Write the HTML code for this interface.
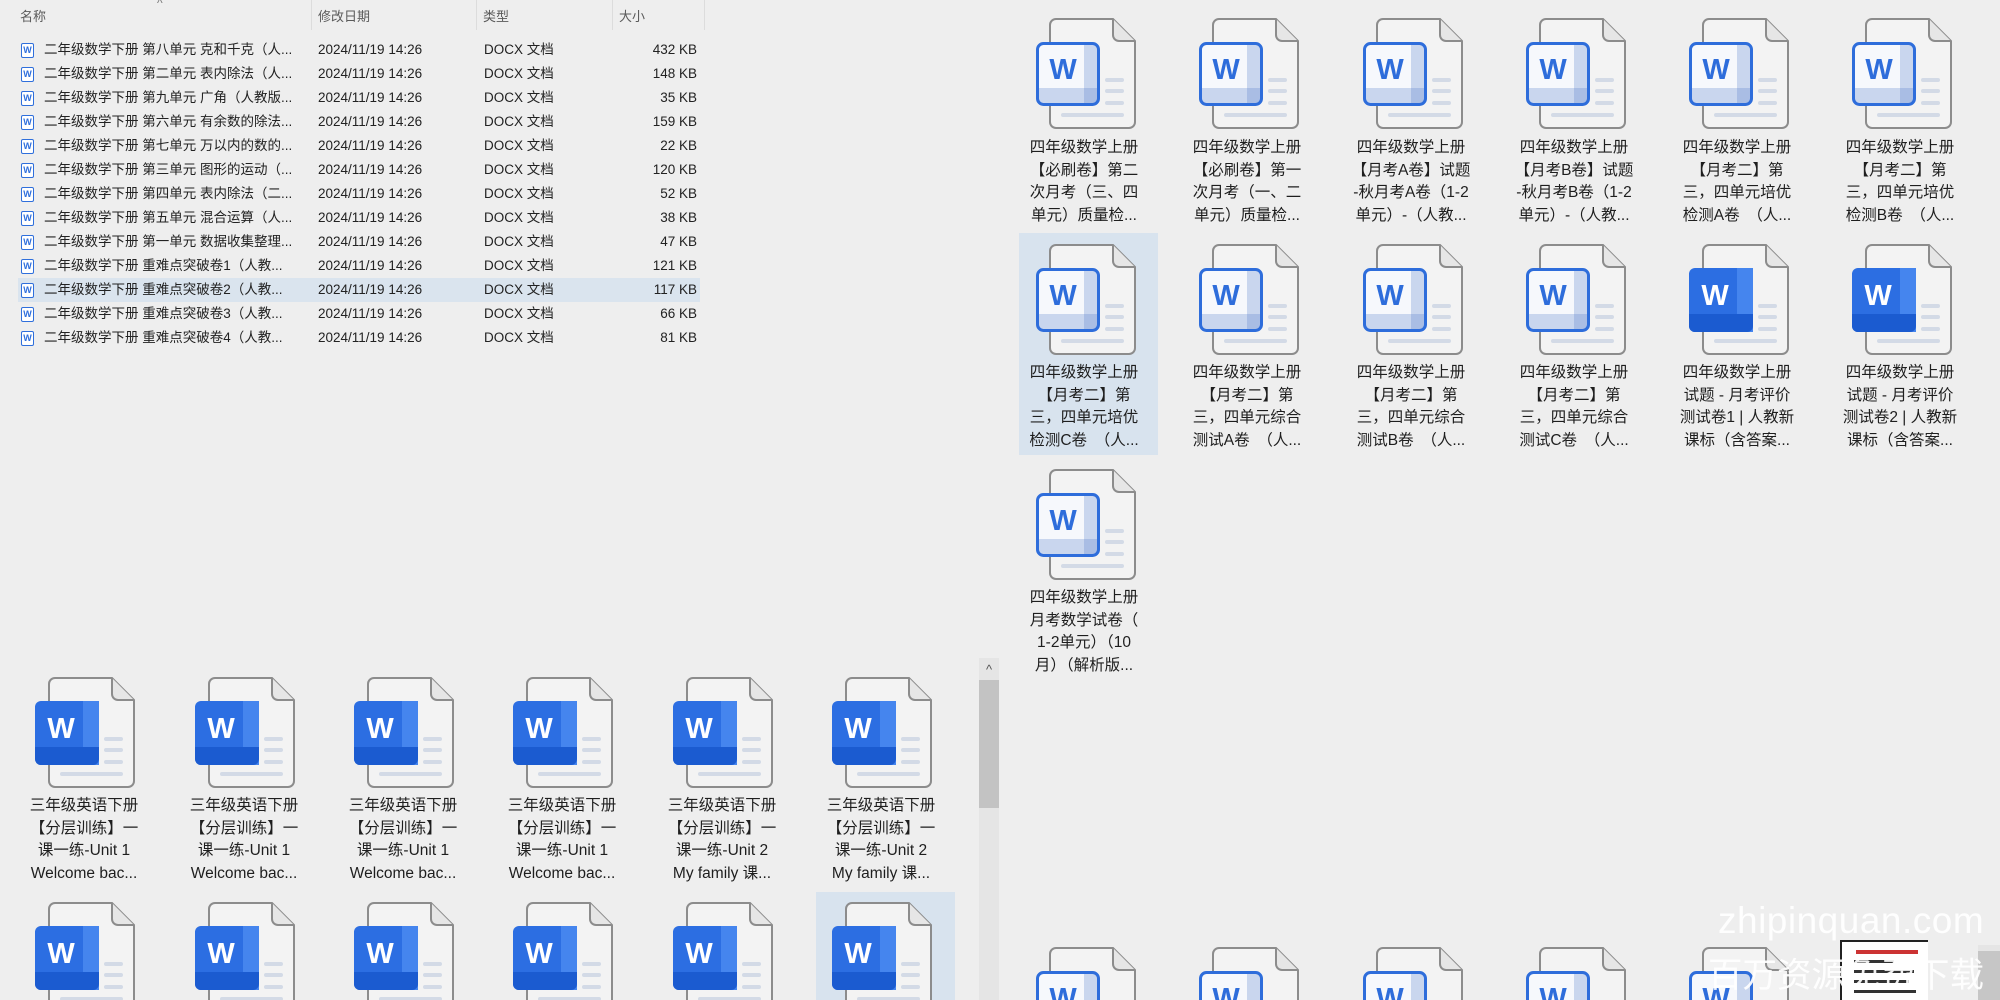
<!DOCTYPE html>
<html><head><meta charset="utf-8">
<style>
*{margin:0;padding:0;box-sizing:border-box}
html,body{width:2000px;height:1000px;overflow:hidden;background:#eeeeee;font-family:"Liberation Sans","Noto Sans CJK SC",sans-serif}
#w{position:relative;width:2000px;height:1000px;overflow:hidden;background:#eeeeee}
.a{position:absolute}
.hd{position:absolute;top:6px;font-size:13px;color:#5a5a5a}
.sep{position:absolute;top:0;width:1px;height:30px;background:#dcdcdc}
.row{position:absolute;left:18px;width:682px;height:24px;font-size:13.5px;color:#222;line-height:24px}
.row span{position:absolute;top:0;white-space:nowrap}
.ic{position:absolute;left:3px;top:5px;width:13px;height:15px;border:1.5px solid #2f6fdc;border-radius:2px;background:#fff;font:bold 9px "Liberation Sans",sans-serif;color:#2f6fdc;text-align:center;line-height:12px}
.sel{background:#dae4ee}
.lbl{position:absolute;width:140px;text-align:center;font-size:15.5px;line-height:22.5px;color:#1e1e1e;white-space:nowrap}
.icon{position:absolute;width:100px;height:112px}
</style></head><body><div id="w">
<svg width="0" height="0" style="position:absolute">
<defs>
<symbol id="pg" viewBox="0 0 100 112">
<path d="M20,1 H77 L99,23 V104 a6 6 0 0 1 -6 6 H20 a6 6 0 0 1 -6 -6 V7 a6 6 0 0 1 6 -6Z" fill="#f3f3f3" stroke="#8c8c8c" stroke-width="2"/>
<path d="M77,1 V17 a6 6 0 0 0 6 6 H99" fill="#e6e6e6" stroke="#8c8c8c" stroke-width="2"/>
<g stroke="#d3dae6" stroke-width="4" stroke-linecap="round"><line x1="71" y1="62" x2="86" y2="62"/><line x1="71" y1="73" x2="86" y2="73"/><line x1="71" y1="85" x2="86" y2="85"/><line x1="27" y1="97" x2="86" y2="97"/></g>
</symbol>
<symbol id="wl" viewBox="0 0 100 112">
<use href="#pg"/>
<rect x="1.5" y="25.5" width="61" height="61" rx="6" fill="#f6f8fc"/>
<rect x="48" y="27" width="13" height="58" fill="#c9d6ee"/>
<rect x="3" y="70" width="58" height="15" fill="#c9d6ee"/>
<rect x="48" y="70" width="13" height="15" fill="#a9bde4"/>
<rect x="1.5" y="25.5" width="61" height="61" rx="6" fill="none" stroke="#2e6ddb" stroke-width="3"/>
<text x="27" y="61" text-anchor="middle" font-family="Liberation Sans" font-weight="bold" font-size="29" fill="#2e6ddb">W</text>
</symbol>
<symbol id="ws" viewBox="0 0 100 112">
<use href="#pg"/>
<rect x="0" y="24" width="64" height="64" rx="6" fill="#2c6ee2"/>
<rect x="48" y="24" width="16" height="64" fill="#4585ee"/>
<path d="M0,70 H64 V82 a6 6 0 0 1 -6 6 H6 a6 6 0 0 1 -6 -6Z" fill="#1b5bd0"/>
<text x="26" y="61" text-anchor="middle" font-family="Liberation Sans" font-weight="bold" font-size="29" fill="#fff">W</text>
</symbol>
</defs></svg>

<div class="hd" style="left:20px">名称</div>
<div class="a" style="left:157px;top:-4px;font-size:12px;color:#777">^</div>
<div class="sep" style="left:311px"></div>
<div class="hd" style="left:318px">修改日期</div>
<div class="sep" style="left:476px"></div>
<div class="hd" style="left:483px">类型</div>
<div class="sep" style="left:612px"></div>
<div class="hd" style="left:619px">大小</div>
<div class="sep" style="left:704px"></div>

<div class="row" style="top:38px"><div class="ic">W</div><span style="left:26px">二年级数学下册  第八单元 克和千克（人...</span><span style="left:300px">2024/11/19 14:26</span><span style="left:466px">DOCX 文档</span><span style="right:3px">432 KB</span></div>
<div class="row" style="top:62px"><div class="ic">W</div><span style="left:26px">二年级数学下册  第二单元 表内除法（人...</span><span style="left:300px">2024/11/19 14:26</span><span style="left:466px">DOCX 文档</span><span style="right:3px">148 KB</span></div>
<div class="row" style="top:86px"><div class="ic">W</div><span style="left:26px">二年级数学下册  第九单元 广角（人教版...</span><span style="left:300px">2024/11/19 14:26</span><span style="left:466px">DOCX 文档</span><span style="right:3px">35 KB</span></div>
<div class="row" style="top:110px"><div class="ic">W</div><span style="left:26px">二年级数学下册  第六单元 有余数的除法...</span><span style="left:300px">2024/11/19 14:26</span><span style="left:466px">DOCX 文档</span><span style="right:3px">159 KB</span></div>
<div class="row" style="top:134px"><div class="ic">W</div><span style="left:26px">二年级数学下册  第七单元 万以内的数的...</span><span style="left:300px">2024/11/19 14:26</span><span style="left:466px">DOCX 文档</span><span style="right:3px">22 KB</span></div>
<div class="row" style="top:158px"><div class="ic">W</div><span style="left:26px">二年级数学下册  第三单元 图形的运动（...</span><span style="left:300px">2024/11/19 14:26</span><span style="left:466px">DOCX 文档</span><span style="right:3px">120 KB</span></div>
<div class="row" style="top:182px"><div class="ic">W</div><span style="left:26px">二年级数学下册  第四单元 表内除法（二...</span><span style="left:300px">2024/11/19 14:26</span><span style="left:466px">DOCX 文档</span><span style="right:3px">52 KB</span></div>
<div class="row" style="top:206px"><div class="ic">W</div><span style="left:26px">二年级数学下册  第五单元 混合运算（人...</span><span style="left:300px">2024/11/19 14:26</span><span style="left:466px">DOCX 文档</span><span style="right:3px">38 KB</span></div>
<div class="row" style="top:230px"><div class="ic">W</div><span style="left:26px">二年级数学下册  第一单元 数据收集整理...</span><span style="left:300px">2024/11/19 14:26</span><span style="left:466px">DOCX 文档</span><span style="right:3px">47 KB</span></div>
<div class="row" style="top:254px"><div class="ic">W</div><span style="left:26px">二年级数学下册  重难点突破卷1（人教...</span><span style="left:300px">2024/11/19 14:26</span><span style="left:466px">DOCX 文档</span><span style="right:3px">121 KB</span></div>
<div class="row sel" style="top:278px"><div class="ic">W</div><span style="left:26px">二年级数学下册  重难点突破卷2（人教...</span><span style="left:300px">2024/11/19 14:26</span><span style="left:466px">DOCX 文档</span><span style="right:3px">117 KB</span></div>
<div class="row" style="top:302px"><div class="ic">W</div><span style="left:26px">二年级数学下册  重难点突破卷3（人教...</span><span style="left:300px">2024/11/19 14:26</span><span style="left:466px">DOCX 文档</span><span style="right:3px">66 KB</span></div>
<div class="row" style="top:326px"><div class="ic">W</div><span style="left:26px">二年级数学下册  重难点突破卷4（人教...</span><span style="left:300px">2024/11/19 14:26</span><span style="left:466px">DOCX 文档</span><span style="right:3px">81 KB</span></div>

<div class="a" style="left:1019px;top:233px;width:139px;height:222px;background:#d8e3ee"></div>
<div class="a" style="left:816px;top:892px;width:139px;height:108px;background:#d8e3ee"></div>

<svg class="icon" style="left:1036px;top:18px"><use href="#wl"/></svg>
<svg class="icon" style="left:1199px;top:18px"><use href="#wl"/></svg>
<svg class="icon" style="left:1363px;top:18px"><use href="#wl"/></svg>
<svg class="icon" style="left:1526px;top:18px"><use href="#wl"/></svg>
<svg class="icon" style="left:1689px;top:18px"><use href="#wl"/></svg>
<svg class="icon" style="left:1852px;top:18px"><use href="#wl"/></svg>
<div class="lbl" style="left:1014px;top:137px">四年级数学上册<br>【必刷卷】第二<br>次月考（三、四<br>单元）质量检...</div>
<div class="lbl" style="left:1177px;top:137px">四年级数学上册<br>【必刷卷】第一<br>次月考（一、二<br>单元）质量检...</div>
<div class="lbl" style="left:1341px;top:137px">四年级数学上册<br>【月考A卷】试题<br>-秋月考A卷（1-2<br>单元）-（人教...</div>
<div class="lbl" style="left:1504px;top:137px">四年级数学上册<br>【月考B卷】试题<br>-秋月考B卷（1-2<br>单元）-（人教...</div>
<div class="lbl" style="left:1667px;top:137px">四年级数学上册<br>【月考二】第<br>三，四单元培优<br>检测A卷　（人...</div>
<div class="lbl" style="left:1830px;top:137px">四年级数学上册<br>【月考二】第<br>三，四单元培优<br>检测B卷　（人...</div>

<svg class="icon" style="left:1036px;top:244px"><use href="#wl"/></svg>
<svg class="icon" style="left:1199px;top:244px"><use href="#wl"/></svg>
<svg class="icon" style="left:1363px;top:244px"><use href="#wl"/></svg>
<svg class="icon" style="left:1526px;top:244px"><use href="#wl"/></svg>
<svg class="icon" style="left:1689px;top:244px"><use href="#ws"/></svg>
<svg class="icon" style="left:1852px;top:244px"><use href="#ws"/></svg>
<div class="lbl" style="left:1014px;top:362px">四年级数学上册<br>【月考二】第<br>三，四单元培优<br>检测C卷　（人...</div>
<div class="lbl" style="left:1177px;top:362px">四年级数学上册<br>【月考二】第<br>三，四单元综合<br>测试A卷　（人...</div>
<div class="lbl" style="left:1341px;top:362px">四年级数学上册<br>【月考二】第<br>三，四单元综合<br>测试B卷　（人...</div>
<div class="lbl" style="left:1504px;top:362px">四年级数学上册<br>【月考二】第<br>三，四单元综合<br>测试C卷　（人...</div>
<div class="lbl" style="left:1667px;top:362px">四年级数学上册<br>试题 - 月考评价<br>测试卷1 | 人教新<br>课标（含答案...</div>
<div class="lbl" style="left:1830px;top:362px">四年级数学上册<br>试题 - 月考评价<br>测试卷2 | 人教新<br>课标（含答案...</div>

<svg class="icon" style="left:1036px;top:469px"><use href="#wl"/></svg>
<div class="lbl" style="left:1014px;top:587px">四年级数学上册<br>月考数学试卷（<br>1-2单元）（10<br>月）（解析版...</div>

<svg class="icon" style="left:1036px;top:947px;height:53px" viewBox="0 0 100 53"><use href="#wl" width="100" height="112"/></svg>
<svg class="icon" style="left:1199px;top:947px;height:53px" viewBox="0 0 100 53"><use href="#wl" width="100" height="112"/></svg>
<svg class="icon" style="left:1363px;top:947px;height:53px" viewBox="0 0 100 53"><use href="#wl" width="100" height="112"/></svg>
<svg class="icon" style="left:1526px;top:947px;height:53px" viewBox="0 0 100 53"><use href="#wl" width="100" height="112"/></svg>
<svg class="icon" style="left:1689px;top:947px;height:53px" viewBox="0 0 100 53"><use href="#wl" width="100" height="112"/></svg>

<svg class="icon" style="left:35px;top:677px"><use href="#ws"/></svg>
<svg class="icon" style="left:195px;top:677px"><use href="#ws"/></svg>
<svg class="icon" style="left:354px;top:677px"><use href="#ws"/></svg>
<svg class="icon" style="left:513px;top:677px"><use href="#ws"/></svg>
<svg class="icon" style="left:673px;top:677px"><use href="#ws"/></svg>
<svg class="icon" style="left:832px;top:677px"><use href="#ws"/></svg>
<div class="lbl" style="left:14px;top:795px">三年级英语下册<br>【分层训练】一<br>课一练-Unit 1<br>Welcome bac...</div>
<div class="lbl" style="left:174px;top:795px">三年级英语下册<br>【分层训练】一<br>课一练-Unit 1<br>Welcome bac...</div>
<div class="lbl" style="left:333px;top:795px">三年级英语下册<br>【分层训练】一<br>课一练-Unit 1<br>Welcome bac...</div>
<div class="lbl" style="left:492px;top:795px">三年级英语下册<br>【分层训练】一<br>课一练-Unit 1<br>Welcome bac...</div>
<div class="lbl" style="left:652px;top:795px">三年级英语下册<br>【分层训练】一<br>课一练-Unit 2<br>My family 课...</div>
<div class="lbl" style="left:811px;top:795px">三年级英语下册<br>【分层训练】一<br>课一练-Unit 2<br>My family 课...</div>
<svg class="icon" style="left:35px;top:902px;height:98px" viewBox="0 0 100 98"><use href="#ws" width="100" height="112"/></svg>
<svg class="icon" style="left:195px;top:902px;height:98px" viewBox="0 0 100 98"><use href="#ws" width="100" height="112"/></svg>
<svg class="icon" style="left:354px;top:902px;height:98px" viewBox="0 0 100 98"><use href="#ws" width="100" height="112"/></svg>
<svg class="icon" style="left:513px;top:902px;height:98px" viewBox="0 0 100 98"><use href="#ws" width="100" height="112"/></svg>
<svg class="icon" style="left:673px;top:902px;height:98px" viewBox="0 0 100 98"><use href="#ws" width="100" height="112"/></svg>
<svg class="icon" style="left:832px;top:902px;height:98px" viewBox="0 0 100 98"><use href="#ws" width="100" height="112"/></svg>

<div class="a" style="left:979px;top:658px;width:20px;height:342px;background:#e5e5e5"></div>
<div class="a" style="left:979px;top:658px;width:20px;height:22px;color:#555;font-size:13px;text-align:center;line-height:24px">^</div>
<div class="a" style="left:979px;top:680px;width:20px;height:128px;background:#c3c3c3"></div>

<div class="a" style="left:1978px;top:945px;width:22px;height:55px;background:#e5e5e5"></div>
<div class="a" style="left:1978px;top:951px;width:22px;height:49px;background:#c6c6c6"></div>

<div class="a" style="left:1840px;top:940px;width:88px;height:60px;background:#fff;border-left:2px solid #222;border-top:2px solid #222">
<div class="a" style="left:14px;top:8px;width:62px;height:4px;background:#c33"></div>
<div class="a" style="left:12px;top:18px;width:40px;height:3px;background:#333"></div>
<div class="a" style="left:12px;top:28px;width:60px;height:3px;background:#333"></div>
<div class="a" style="left:12px;top:38px;width:55px;height:3px;background:#333"></div>
<div class="a" style="left:12px;top:48px;width:62px;height:3px;background:#333"></div>
</div>

<div class="a" style="left:1718px;top:900px;font-size:37px;color:rgba(255,255,255,0.92);white-space:nowrap;letter-spacing:0.5px">zhipinquan.com</div>
<div class="a" style="left:1708px;top:950px;font-size:34.5px;color:rgba(255,255,255,0.92);white-space:nowrap;font-family:'Noto Sans CJK SC',sans-serif;line-height:44px">百万资源免费下载</div>
</div></body></html>
